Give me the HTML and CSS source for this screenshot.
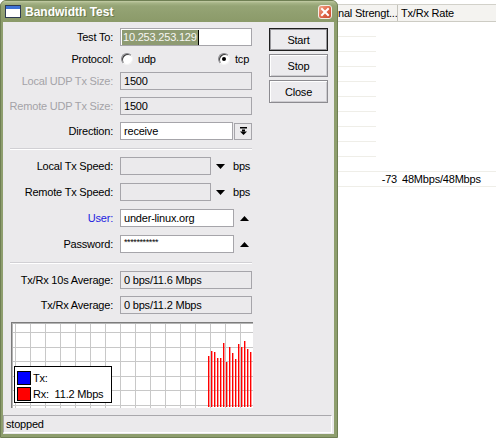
FILE: index.html
```html
<!DOCTYPE html>
<html>
<head>
<meta charset="utf-8">
<title>Bandwidth Test</title>
<link rel="stylesheet" href="styles.css">
</head>
<body>
<div class="desktop">
  <div class="list">
    <div class="list-head">
      <div class="col-sig">nal Strengt...</div>
      <div class="col-rate">Tx/Rx Rate</div>
    </div>
    <div class="row"><div class="cell"></div></div>
    <div class="row"><div class="cell"></div></div>
    <div class="row"><div class="cell"></div></div>
    <div class="row"><div class="cell"></div></div>
    <div class="row"><div class="cell"></div></div>
    <div class="row"><div class="cell"></div></div>
    <div class="row"><div class="cell"></div></div>
    <div class="row"><div class="cell"></div></div>
    <div class="row"><div class="cell"></div></div>
    <div class="row full"></div>
    <div class="row full"><div class="c-sig">-73</div><div class="c-rate">48Mbps/48Mbps</div></div>
  </div>

  <div class="window">
    <div class="titlebar">
      <svg class="wicon" width="16" height="13" viewBox="0 0 16 13"><rect x="0.5" y="0.5" width="15" height="12" fill="#fff" stroke="#2d3a52"/><rect x="1" y="1" width="14" height="3" fill="#3f73d6"/></svg>
      <div class="title">Bandwidth Test</div>
      <div class="close"><svg width="12" height="12" viewBox="0 0 12 12"><path d="M3 3L9 9M9 3L3 9" stroke="#fff" stroke-width="2" stroke-linecap="square"/></svg></div>
    </div>
    <div class="client">
      <div class="main">
        <div class="form">
          <div class="frow mb4">
            <div class="lbl">Test To:</div>
            <div class="field w-full sfield"><span class="sel">10.253.253.129</span></div>
          </div>
          <div class="frow mb4">
            <div class="lbl">Protocol:</div>
            <div class="opt opt1"><span class="radio"></span>udp</div>
            <div class="opt"><span class="radio on"></span>tcp</div>
          </div>
          <div class="frow mb7">
            <div class="lbl dim">Local UDP Tx Size:</div>
            <div class="field w-full dis">1500</div>
          </div>
          <div class="frow mb7">
            <div class="lbl dim">Remote UDP Tx Size:</div>
            <div class="field w-full dis">1500</div>
          </div>
          <div class="frow">
            <div class="lbl">Direction:</div>
            <div class="field w-dir">receive</div>
            <div class="ddbtn"><svg width="7" height="8" viewBox="0 0 7 8"><rect x="0" y="0" width="7" height="1.5" fill="#000"/><rect x="2" y="2.5" width="3" height="2" fill="#000"/><polygon points="0,4.5 7,4.5 3.5,8" fill="#000"/></svg></div>
          </div>
          <div class="sep"></div>
          <div class="frow mb8">
            <div class="lbl">Local Tx Speed:</div>
            <div class="field w-speed dis"></div>
            <svg class="tri-down" width="9" height="5" viewBox="0 0 9 5"><polygon points="0,0 9,0 4.5,5" fill="#000"/></svg>
            <div class="unit">bps</div>
          </div>
          <div class="frow mb8">
            <div class="lbl">Remote Tx Speed:</div>
            <div class="field w-speed dis"></div>
            <svg class="tri-down" width="9" height="5" viewBox="0 0 9 5"><polygon points="0,0 9,0 4.5,5" fill="#000"/></svg>
            <div class="unit">bps</div>
          </div>
          <div class="frow mb8">
            <div class="lbl blue">User:</div>
            <div class="field w-user">under-linux.org</div>
            <svg class="tri-up" width="9" height="5" viewBox="0 0 9 5"><polygon points="0,5 9,5 4.5,0" fill="#000"/></svg>
          </div>
          <div class="frow">
            <div class="lbl">Password:</div>
            <div class="field w-user pw">***********</div>
            <svg class="tri-up" width="9" height="5" viewBox="0 0 9 5"><polygon points="0,5 9,5 4.5,0" fill="#000"/></svg>
          </div>
          <div class="sep sep2"></div>
          <div class="frow mb7">
            <div class="lbl">Tx/Rx 10s Average:</div>
            <div class="field w-full dis">0 bps/11.6 Mbps</div>
          </div>
          <div class="frow">
            <div class="lbl">Tx/Rx Average:</div>
            <div class="field w-full dis">0 bps/11.2 Mbps</div>
          </div>
        </div>
        <div class="buttons">
          <div class="btn default">Start</div>
          <div class="btn">Stop</div>
          <div class="btn">Close</div>
        </div>
      </div>

      <div class="chart">
        <svg width="242" height="86" viewBox="0 0 242 86">
          <rect x="0" y="0" width="242" height="86" fill="#fff"/>
          <path d="M4.5 0V86M19.5 0V86M34.5 0V86M49.5 0V86M64.5 0V86M79.5 0V86M94.5 0V86M109.5 0V86M124.5 0V86M139.5 0V86M154.5 0V86M169.5 0V86M184.5 0V86M199.5 0V86M214.5 0V86M229.5 0V86M0 10.5H242M0 25.5H242M0 39.5H242M0 54.5H242M0 68.5H242M0 83.5H242" stroke="#c8c8c8" stroke-width="1" fill="none"/>
          <rect x="0" y="0" width="242" height="1" fill="#7c7c7c"/>
          <rect x="0" y="1" width="242" height="1" fill="#b4b4b4"/>
          <rect x="0" y="0" width="1" height="86" fill="#7c7c7c"/>
          <rect x="1" y="1" width="1" height="85" fill="#b4b4b4"/>
          <g fill="#ff0000">
            <rect x="197" y="34" width="1.4" height="51"/>
            <rect x="200" y="29" width="1.4" height="56"/>
            <rect x="203" y="30" width="1.4" height="55"/>
            <rect x="206" y="36" width="1.4" height="49"/>
            <rect x="209" y="36" width="1.4" height="49"/>
            <rect x="212" y="21" width="1.4" height="64"/>
            <rect x="215" y="40" width="1.4" height="45"/>
            <rect x="218" y="25" width="1.4" height="60"/>
            <rect x="221" y="31" width="1.4" height="54"/>
            <rect x="224" y="37" width="1.4" height="48"/>
            <rect x="227" y="22" width="1.4" height="63"/>
            <rect x="230" y="25" width="1.4" height="60"/>
            <rect x="233" y="19" width="1.4" height="66"/>
            <rect x="236" y="27" width="1.4" height="58"/>
            <rect x="239" y="30" width="1.4" height="55"/>
          </g>
        </svg>
        <div class="legend">
          <div class="lrow"><span class="sw tx"></span><span class="ltext">Tx:</span></div>
          <div class="lrow"><span class="sw rx"></span><span class="ltext">Rx:  11.2 Mbps</span></div>
        </div>
      </div>

      <div class="status">stopped</div>
    </div>
  </div>
</div>
</body>
</html>
```
FILE: styles.css
```css
* { box-sizing: border-box; }
html, body { margin: 0; padding: 0; }
body {
  width: 496px;
  height: 443px;
  overflow: hidden;
  background: #fff;
  font-family: "Liberation Sans", Arial, sans-serif;
  font-size: 11px;
  letter-spacing: -0.2px;
  color: #000;
}
.desktop { position: relative; width: 496px; height: 443px; }

/* background list */
.list { padding-top: 4px; }
.list-head {
  display: flex;
  height: 18px;
  padding-left: 337px;
  background: #f4f3f0;
  border-top: 1px solid #d2d1ca;
  border-bottom: 1px solid #cdccc4;
}
.col-sig {
  width: 61px;
  padding-left: 1px;
  border-right: 1px solid #c4c3bb;
  line-height: 16px;
  white-space: nowrap;
  overflow: hidden;
}
.col-rate { padding-left: 3px; line-height: 16px; white-space: nowrap; }
.row { display: flex; height: 15px; padding-left: 337px; }
.row .cell { width: 39px; border-bottom: 1px solid #efeee8; }
.row.full { border-bottom: 1px solid #efeee8; }
.c-sig { width: 61px; text-align: right; padding-right: 1px; line-height: 14px; }
.c-rate { padding-left: 4px; line-height: 14px; white-space: nowrap; }

/* window */
.window {
  position: absolute;
  left: 0;
  top: 0;
  width: 338px;
  height: 438px;
  display: flex;
  flex-direction: column;
  background: #8e9e6e;
  border: 1px solid #6f7f53;
  border-radius: 6px 6px 0 0;
}
.titlebar {
  height: 21px;
  display: flex;
  align-items: center;
  padding-left: 4px;
  padding-right: 5px;
  border-radius: 5px 5px 0 0;
  background: linear-gradient(#c3cca6 0, #a6b487 2px, #95a475 5px, #8b9a69 100%);
  color: #fff;
}
.wicon { display: block; flex: none; }
.title {
  margin-left: 4px;
  font-weight: bold;
  font-size: 12px;
  letter-spacing: 0;
  text-shadow: 1px 1px 0 #6b7a4c;
}
.close {
  margin-left: auto;
  width: 14px;
  height: 14px;
  border: 1px solid #f4eee6;
  border-radius: 3px;
  background: linear-gradient(135deg, #f2a58a, #de6446 55%, #c9482e);
  display: flex;
  align-items: center;
  justify-content: center;
}
.close svg { display: block; }

.client {
  flex: 1;
  margin: 0 3px 3px 2px;
  background: #ebeaec;
  display: flex;
  flex-direction: column;
}
.main { display: flex; padding-top: 6px; }
.form { width: 250px; }
.buttons {
  margin-left: 16px;
  display: flex;
  flex-direction: column;
  gap: 3px;
}

.frow { display: flex; align-items: center; height: 18px; }
.mb4 { margin-bottom: 4px; }
.mb7 { margin-bottom: 7px; }
.mb8 { margin-bottom: 8px; }
.lbl {
  width: 110px;
  margin-right: 7px;
  text-align: right;
  white-space: nowrap;
}
.lbl.dim { color: #a4a3a8; }
.lbl.blue { color: #1c1ce0; }

.field {
  height: 18px;
  display: flex;
  align-items: center;
  padding-left: 3px;
  border: 1px solid #a6a5aa;
  background: #fff;
  white-space: nowrap;
  overflow: hidden;
}
.field.dis { background: #ebeaec; }
.w-full { width: 132px; }
.w-dir { width: 113px; }
.w-speed { width: 91px; }
.w-user { width: 114px; }
.sfield { padding-left: 1px; }
.sel {
  background: #8e9b72;
  color: #f6f6f2;
  line-height: 15px;
  padding: 0 1px;
  border-right: 1px solid #000;
}
.pw { font-size: 9px; letter-spacing: -0.4px; align-items: flex-start; padding-top: 1px; }

.ddbtn {
  width: 18px;
  height: 17px;
  margin-left: 1px;
  border: 1px solid #a6a5aa;
  background: #ebeaec;
  display: flex;
  align-items: center;
  justify-content: center;
}
.ddbtn svg { display: block; }
.tri-down { display: block; margin-left: 5px; }
.tri-up { display: block; margin-left: 6px; }
.unit { margin-left: 8px; }

.opt { display: flex; align-items: center; }
.opt1 { width: 97px; }
.radio {
  position: relative;
  width: 12px;
  height: 12px;
  margin-left: 1px;
  margin-right: 5px;
  border-radius: 50%;
  background: #fff;
  border: 1px solid;
  border-color: #8a898e #f4f4f4 #f4f4f4 #8a898e;
  box-shadow: inset 1px 1px 0 #3c3c3c;
}
.radio.on::after {
  content: "";
  position: absolute;
  left: 3px;
  top: 3px;
  width: 4px;
  height: 4px;
  border-radius: 50%;
  background: #000;
}

.sep {
  width: 242px;
  height: 2px;
  margin: 8px 0 7px 7px;
  border-top: 1px solid #d1d0d4;
  border-bottom: 1px solid #fff;
}
.sep2 { margin-top: 9px; }

.btn {
  width: 59px;
  height: 23px;
  display: flex;
  align-items: center;
  justify-content: center;
  border: 1px solid #8c8b90;
  background: #ecebee;
  box-shadow: inset 1px 1px 0 #fff, inset -1px -1px 0 #cdccd0;
}
.btn.default {
  border-color: #1e1e1e;
  box-shadow: inset 0 0 0 1px #9a999e;
}

.chart {
  position: relative;
  width: 242px;
  height: 86px;
  margin: 8px 0 0 8px;
}
.chart svg { display: block; }
.legend {
  position: absolute;
  left: 3px;
  top: 44px;
  width: 98px;
  height: 37px;
  padding: 3px 0 0 2px;
  background: #fff;
  border: 1px solid #000;
}
.lrow { display: flex; align-items: center; height: 16px; }
.sw {
  width: 14px;
  height: 14px;
  margin-right: 2px;
  border: 1px solid #000;
}
.sw.tx { background: #0000ff; }
.sw.rx { background: #ff0000; }
.ltext { white-space: pre; }

.status {
  height: 18px;
  margin: 7px 2px 0 0;
  padding-left: 2px;
  line-height: 16px;
  border-top: 1px solid #a9a8ac;
  border-left: 1px solid #a9a8ac;
  border-right: 1px solid #fff;
  border-bottom: 1px solid #fff;
}
```
